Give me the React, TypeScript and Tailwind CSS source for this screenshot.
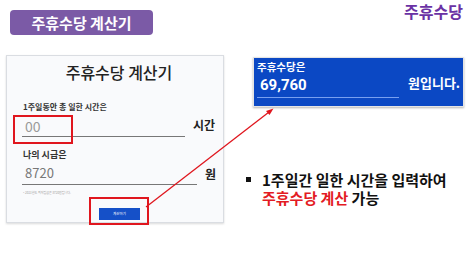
import React from "react";

const font = { fontFamily: '"Noto Sans CJK KR", "Noto Sans", sans-serif' };

export default function App() {
  return (
    <div
      className="relative w-[474px] h-[266px] overflow-hidden bg-white text-[#111]"
      style={font}
    >
      {/* header */}
      <div className="flex items-start justify-between">
        <div className="ml-[10px] mt-[10px] flex h-[25px] w-[143px] items-center justify-center rounded-[4px] bg-[#7b5aa6] text-[15px] font-bold leading-none text-white">
          주휴수당 계산기
        </div>
        <div className="mr-[11px] mt-[1px] text-[16px] font-bold leading-[20px] text-[#6a32a4]">
          주휴수당
        </div>
      </div>

      <div className="mt-[20px] flex items-start">
        {/* calculator card */}
        <div className="ml-[6px] h-[168px] w-[218px] border border-[#dadde2] bg-[#f9fafc] shadow-[0_1px_2px_rgba(0,0,0,0.15)]">
          <div className="mt-[6px] pl-[8px] text-center text-[16px] font-medium leading-[20px] text-[#222]">
            주휴수당 계산기
          </div>
          <div className="mt-[20px] pl-[16px] text-[8px] font-bold leading-[10px] text-[#333]">
            1주일동안 총 일한 시간은
          </div>
          <div className="mt-[6px] flex items-start pl-[15px]">
            <div className="w-[163px] border-b border-[#777] pb-[2px] pl-[3px] text-[14px] leading-[16px] text-[#9a9a9a]">
              00
            </div>
            <div className="ml-[8px] text-[12px] font-bold leading-[14px] text-[#222]">시간</div>
          </div>
          <div className="mt-[12px] pl-[16px] text-[9px] font-bold leading-[12px] text-[#333]">
            나의 시급은
          </div>
          <div className="mt-[4px] flex items-start pl-[15px]">
            <div className="w-[175px] border-b border-[#777] pb-[3px] pl-[3px] text-[13px] leading-[16px] text-[#777]">
              8720
            </div>
            <div className="ml-[8px] mt-[2px] text-[12px] font-bold leading-[14px] text-[#222]">원</div>
          </div>
          <div className="mt-[6px] pl-[16px] text-[3px] leading-[4px] text-[#999]">
            * 2021년도 최저임금은 8720원입니다.
          </div>
          <div className="ml-[92px] mt-[13px] flex h-[12px] w-[41px] items-center justify-center bg-[#1550c8] text-[3.5px] leading-none text-white">
            계산하기
          </div>
        </div>

        {/* result + note */}
        <div className="ml-[22px] flex flex-col">
          <div className="ml-[7px] mt-[2px] h-[50px] w-[211px] border-[1.5px] border-[#e4e4e4] bg-[#0b48c4] shadow-[0_1px_2px_rgba(0,0,0,0.3)]">
            <div className="mt-[2px] pl-[3px] text-[10.5px] font-bold leading-[14px] text-white">주휴수당은</div>
            <div className="flex items-start">
              <div className="ml-[3px] mt-[2px] w-[142px] border-b border-[#78a0f0] pb-[3px] pl-[3px] text-[15px] font-bold leading-[18px] text-white" style={{ fontFamily: 'Roboto, "Noto Sans CJK KR", sans-serif' }}>
                69,760
              </div>
              <div className="ml-[9px] text-[13px] font-bold leading-[18px] text-white">원입니다.</div>
            </div>
          </div>

          <div className="mt-[64px] flex items-start">
            <div className="mt-[6px] h-[5px] w-[5px] bg-[#111]" />
            <div className="ml-[11px] text-[15px] font-bold leading-[18px] text-[#111]">
              <div>1주일간 일한 시간을 입력하여</div>
              <div>
                <span className="text-[#e31b23]">주휴수당 계산</span> 가능
              </div>
            </div>
          </div>
        </div>
      </div>

      {/* highlight overlays */}
      <div className="absolute left-[13px] top-[115px] h-[29px] w-[60px] border-2 border-[#e0161e]" />
      <div className="absolute left-[89px] top-[197px] h-[28px] w-[60px] border-2 border-[#e0161e]" />
      <svg className="absolute left-0 top-0" width="474" height="266">
        <line x1="146" y1="207" x2="271" y2="110.5" stroke="#e0161e" strokeWidth="1.3" />
        <path d="M273.5 108.5 L266 111 L269.5 115 Z" fill="#e0161e" />
      </svg>
    </div>
  );
}
